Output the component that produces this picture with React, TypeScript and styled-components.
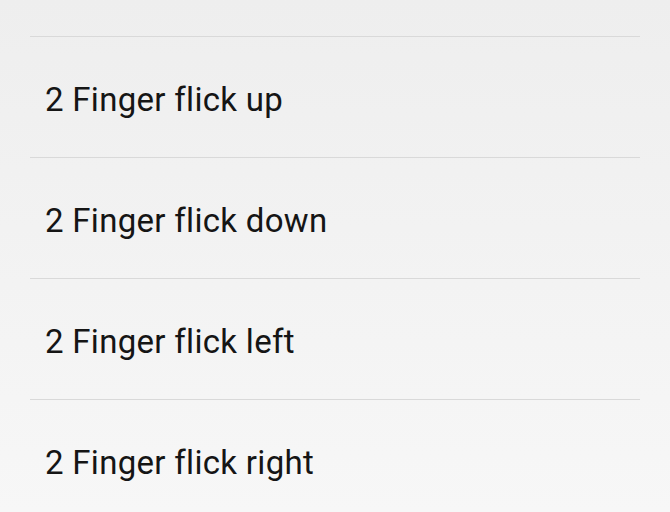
import React from "react";
import styled, { createGlobalStyle } from "styled-components";

const Global = createGlobalStyle`
  html, body { margin: 0; padding: 0; }
  body {
    width: 670px;
    height: 512px;
    overflow: hidden;
    background: linear-gradient(to bottom, #eeeeee 0%, #f7f7f7 100%);
    font-family: Roboto, "Noto Sans", sans-serif;
  }
`;

const Screen = styled.div`
  width: 670px;
  height: 512px;
  box-sizing: border-box;
  padding: 0 30px;
  display: flex;
  flex-direction: column;
`;

const TopSpace = styled.div`
  height: 36px;
  flex: none;
`;

const Row = styled.div`
  flex: none;
  height: 121px;
  box-sizing: border-box;
  border-top: 1px solid #d9d9d9;
  display: flex;
  align-items: center;
  padding: 4px 0 0 15px;
  font-size: 33px;
  letter-spacing: 0.3px;
  color: #151515;
  line-height: 1;
`;

const items = [
  "2 Finger flick up",
  "2 Finger flick down",
  "2 Finger flick left",
  "2 Finger flick right",
];

export default function App() {
  return (
    <>
      <Global />
      <Screen>
        <TopSpace />
        {items.map((t) => (
          <Row key={t}>{t}</Row>
        ))}
      </Screen>
    </>
  );
}
